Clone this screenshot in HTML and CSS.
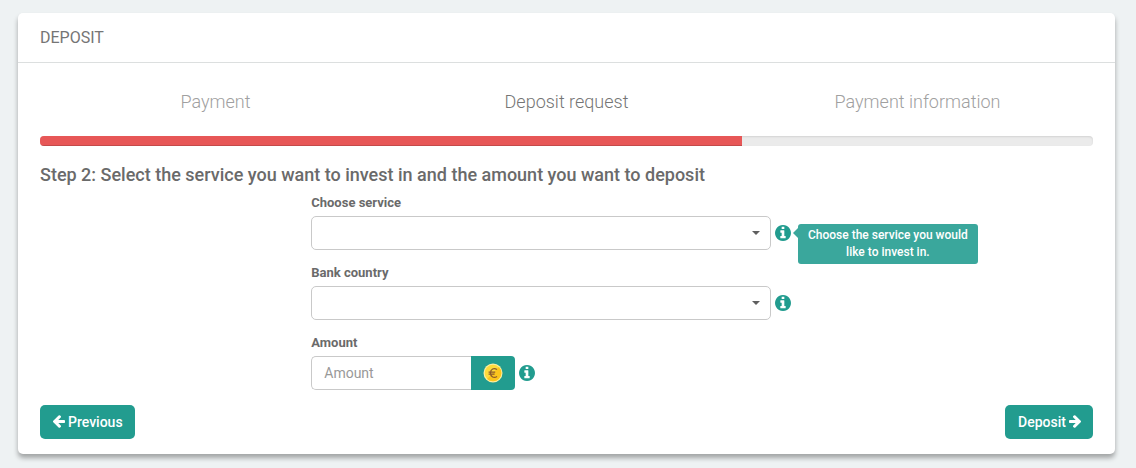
FILE: index.html
```html
<!DOCTYPE html>
<html lang="en">
<head>
<meta charset="utf-8">
<meta name="viewport" content="width=device-width, initial-scale=1">
<title>Deposit</title>
<link rel="stylesheet" href="styles.css">
</head>
<body>
<svg class="sprite" aria-hidden="true">
  <symbol id="info" viewBox="0 128 1536 1536"><path d="M1024 1376v-160q0-14-9-23t-23-9h-96v-512q0-14-9-23t-23-9h-320q-14 0-23 9t-9 23v160q0 14 9 23t23 9h96v320h-96q-14 0-23 9t-9 23v160q0 14 9 23t23 9h448q14 0 23-9t9-23zm-128-896v-160q0-14-9-23t-23-9h-192q-14 0-23 9t-9 23v160q0 14 9 23t23 9h192q14 0 23-9t9-23zm640 416q0 209-103 385.5t-279.5 279.5-385.5 103-385.5-103-279.5-279.5-103-385.5 103-385.5 279.5-279.5 385.5-103 385.5 103 279.5 279.5 103 385.5z"/></symbol>
  <symbol id="arrow" viewBox="192 192 1472 1536"><path d="M1664 896v128q0 53-32.5 90.5t-84.5 37.5h-704l293 294q38 36 38 90t-38 90l-75 76q-37 37-90 37-52 0-91-37l-651-652q-37-37-37-90 0-52 37-91l651-650q38-38 91-38 52 0 90 38l75 74q38 38 38 91t-38 91l-293 293h704q52 0 84.5 37.5t32.5 90.5z"/></symbol>
</svg>
<main class="card">
  <header class="card-header"><h1 class="card-title">DEPOSIT</h1></header>
  <form class="card-body">
    <ol class="steps">
      <li class="step">Payment</li>
      <li class="step step-active" aria-current="step">Deposit request</li>
      <li class="step">Payment information</li>
    </ol>
    <div class="progress"><div class="progress-bar"></div></div>
    <h2 class="step-title">Step 2: Select the service you want to invest in and the amount you want to deposit</h2>
    <div class="fields">
      <div class="field">
        <label class="label" for="service">Choose service</label>
        <div class="control-row">
          <div class="select-wrap"><select class="control" id="service"><option></option></select></div>
          <span class="hint">
            <svg class="info-icon" aria-hidden="true"><use href="#info"/></svg>
            <span class="tooltip" role="tooltip">Choose the service you would like to invest in.</span>
          </span>
        </div>
      </div>
      <div class="field">
        <label class="label" for="country">Bank country</label>
        <div class="control-row">
          <div class="select-wrap"><select class="control" id="country"><option></option></select></div>
          <span class="hint"><svg class="info-icon" aria-hidden="true"><use href="#info"/></svg></span>
        </div>
      </div>
      <div class="field">
        <label class="label" for="amount">Amount</label>
        <div class="control-row">
          <div class="amount-group">
            <input class="control amount-input" id="amount" type="text" placeholder="Amount">
            <span class="currency">
              <svg class="coin" viewBox="0 0 20 20" role="img" aria-label="Euro">
                <circle cx="10" cy="10" r="9.5" fill="#fbeea0"/>
                <circle cx="10" cy="10" r="8.3" fill="#fddb3c"/>
                <path d="M15.9 4.1A8.3 8.3 0 0 1 4.1 15.9z" fill="#fbc51d"/>
                <path d="M14 6.6C11 4.4 7.5 6 7.5 10S11 15.6 14 13.4M5.6 9.1h6.6M5.6 11.1h6" fill="none" stroke="#8a5a2b" stroke-width="1.3"/>
              </svg>
            </span>
          </div>
          <span class="hint"><svg class="info-icon" aria-hidden="true"><use href="#info"/></svg></span>
        </div>
      </div>
    </div>
    <div class="actions">
      <button class="button" type="button"><svg class="arrow" aria-hidden="true"><use href="#arrow"/></svg>Previous</button>
      <button class="button" type="submit">Deposit<svg class="arrow arrow-right" aria-hidden="true"><use href="#arrow"/></svg></button>
    </div>
  </form>
</main>
</body>
</html>
```
FILE: styles.css
```css
* { box-sizing: border-box; }

body {
  margin: 0;
  padding: 13px 21px 14px 18px;
  background: #eef2f3;
  color: #6a6a6a;
  font: 13px/18px Roboto, sans-serif;
}

.sprite { display: none; }

.card {
  background: #fff;
  border-radius: 5px;
  box-shadow: 0 4px 5px rgba(0, 0, 0, 0.32);
}

.card-header {
  padding: 14px 22px 13px;
  border-bottom: 1px solid #dcdfdf;
}

.card-title {
  margin: 0;
  color: #757575;
  font-size: 16px;
  font-weight: 400;
  line-height: 22px;
}

.card-body { padding: 26px 22px 15px; }

.steps {
  display: grid;
  grid-template-columns: repeat(3, 1fr);
  margin: 0;
  padding: 0;
  list-style: none;
  text-align: center;
  font-size: 18px;
  font-weight: 300;
  line-height: 26px;
}

.step { color: #a0a0a0; }
.step-active { color: #757575; }

.progress {
  height: 10px;
  margin-top: 21px;
  overflow: hidden;
  border-radius: 4px;
  background: #ebebeb;
  box-shadow: inset 0 1px 2px rgba(0, 0, 0, 0.1);
}

.progress-bar {
  width: 66.66%;
  height: 100%;
  background: #e75757;
  box-shadow: inset 0 -1px 0 rgba(0, 0, 0, 0.15);
}

.step-title {
  margin: 17px 0 7px;
  font-size: 18px;
  font-weight: 500;
  line-height: 24px;
}

.fields {
  display: flex;
  flex-direction: column;
  gap: 14px;
  padding-left: calc(25% + 8px);
}

.label {
  display: block;
  margin-bottom: 4px;
  font-weight: 700;
}

.control-row {
  display: flex;
  align-items: center;
  gap: 4px;
}

.select-wrap {
  position: relative;
  width: 58.8%;
}

.select-wrap::after {
  content: "";
  position: absolute;
  top: 15px;
  right: 11px;
  border: 4px solid transparent;
  border-top-color: #5f5f5f;
  border-bottom: 0;
  pointer-events: none;
}

.control {
  display: block;
  width: 100%;
  height: 34px;
  padding: 0 12px;
  border: 1px solid #c9c9c9;
  border-radius: 5px;
  background: #fff;
  color: inherit;
  font: 14px/20px Roboto, sans-serif;
  appearance: none;
}

.control::placeholder { color: #999; opacity: 1; }

.amount-group { display: flex; }

.amount-input {
  width: 160px;
  border-right: 0;
  border-radius: 5px 0 0 5px;
}

.currency {
  display: flex;
  align-items: center;
  justify-content: center;
  width: 44px;
  border-radius: 0 4px 4px 0;
  background: #229c8f;
}

.coin { width: 20px; height: 20px; }

.hint {
  position: relative;
  display: flex;
}

.info-icon {
  width: 16px;
  height: 16px;
  fill: #229c8f;
}

.tooltip {
  position: absolute;
  top: -1px;
  left: 23px;
  width: 180px;
  padding: 3px 8px;
  border-radius: 3px;
  background: #3aa79c;
  color: #fff;
  font-size: 12px;
  font-weight: 500;
  line-height: 17px;
  text-align: center;
}

.tooltip::before {
  content: "";
  position: absolute;
  top: 4px;
  left: -5px;
  border: 5px solid transparent;
  border-right-color: #3aa79c;
  border-left: 0;
}

.actions {
  display: flex;
  justify-content: space-between;
  margin-top: 15px;
}

.button {
  display: flex;
  align-items: center;
  gap: 3px;
  height: 34px;
  padding: 0 12px 1px 13px;
  border: 0;
  border-radius: 5px;
  background: #229c8f;
  color: #fff;
  font: 500 14px/20px Roboto, sans-serif;
}

.arrow {
  width: 12px;
  height: 13px;
  fill: currentColor;
}

.arrow-right { transform: rotate(180deg); }
```
